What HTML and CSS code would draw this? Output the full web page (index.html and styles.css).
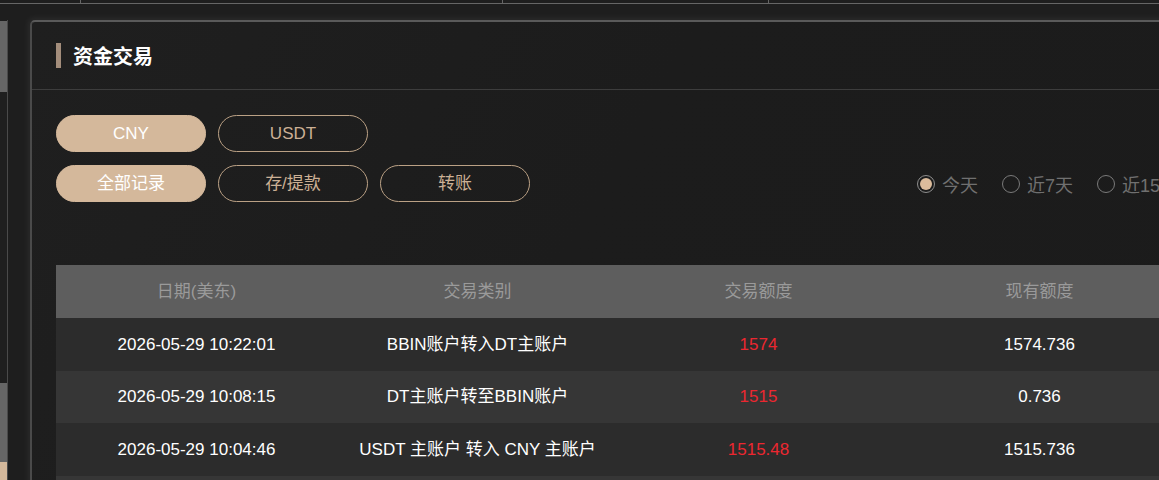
FILE: index.html
```html
<!DOCTYPE html>
<html lang="zh-CN">
<head>
    <meta charset="UTF-8">
    <meta name="viewport" content="width=device-width, initial-scale=1.0">
    <title>资金交易</title>
    <link rel="stylesheet" href="styles.css">
</head>
<body>
    <div class="topbar">
        <span class="topbar-cell cell-a"></span>
        <span class="topbar-cell cell-b"></span>
        <span class="topbar-cell cell-c"></span>
        <span class="topbar-cell cell-d"></span>
    </div>

    <div class="layout">
        <div class="sidebar">
            <div class="side-block side-gray"></div>
            <div class="side-block side-dark"></div>
            <div class="side-block side-gray short"></div>
            <div class="side-block side-gold"></div>
        </div>

        <div class="panel">
            <div class="panel-header">
                <span class="title-bar"></span>
                <h1>资金交易</h1>
            </div>

            <div class="panel-body">
                <div class="btn-row">
                    <button class="pill active">CNY</button>
                    <button class="pill">USDT</button>
                </div>
                <div class="btn-row filter-row">
                    <button class="pill active">全部记录</button>
                    <button class="pill">存/提款</button>
                    <button class="pill">转账</button>

                    <div class="range">
                        <label class="radio checked"><span class="dot"></span>今天</label>
                        <label class="radio"><span class="dot"></span>近7天</label>
                        <label class="radio"><span class="dot"></span>近15天</label>
                    </div>
                </div>

                <table class="records">
                    <thead>
                        <tr>
                            <th>日期(美东)</th>
                            <th>交易类别</th>
                            <th>交易额度</th>
                            <th>现有额度</th>
                        </tr>
                    </thead>
                    <tbody>
                        <tr>
                            <td>2026-05-29 10:22:01</td>
                            <td>BBIN账户转入DT主账户</td>
                            <td class="amount">1574</td>
                            <td>1574.736</td>
                        </tr>
                        <tr>
                            <td>2026-05-29 10:08:15</td>
                            <td>DT主账户转至BBIN账户</td>
                            <td class="amount">1515</td>
                            <td>0.736</td>
                        </tr>
                        <tr>
                            <td>2026-05-29 10:04:46</td>
                            <td>USDT 主账户 转入 CNY 主账户</td>
                            <td class="amount">1515.48</td>
                            <td>1515.736</td>
                        </tr>
                        <tr class="filler">
                            <td></td>
                            <td></td>
                            <td></td>
                            <td></td>
                        </tr>
                    </tbody>
                </table>
            </div>
        </div>
    </div>
</body>
</html>
```

FILE: styles.css
```css
html, body {
    margin: 0;
    height: 100%;
}
body {
    font-family: "Liberation Sans", "Noto Sans CJK SC", sans-serif;
    font-size: 17px;
    background-color: #1e1e1e;
    color: #fff;
    overflow: hidden;
}

/* top strip */
.topbar {
    display: flex;
    height: 3px;
    border-bottom: 1px solid #666;
}
.topbar-cell {
    border-right: 1px solid #666;
}
.cell-a { width: 80px; }
.cell-b { width: 421px; }
.cell-c { width: 265px; }
.cell-d { flex: 1; border-right: none; }

.layout {
    display: flex;
    padding-top: 16px;
}

/* left column */
.sidebar {
    width: 7px;
    flex-shrink: 0;
    border-right: 1px solid #4a4a4a;
    display: flex;
    flex-direction: column;
    padding-top: 1px;
    height: 460px;
}
.side-block {
    flex-shrink: 0;
}
.side-gray {
    height: 71px;
    background-color: #666;
}
.side-gray.short {
    height: 79px;
}
.side-dark {
    height: 291px;
    background-color: #1f1f1f;
}
.side-gold {
    flex: 1;
    background-color: #d4b89b;
}

/* main panel */
.panel {
    margin-left: 22px;
    width: 1400px;
    flex-shrink: 0;
    background: linear-gradient(120deg, #1f1f1f 0%, #1c1c1c 40%, #1b1b1b 100%);
    border-top: 2px solid #5a5a5a;
    border-left: 2px solid #4a4a4a;
    border-top-left-radius: 5px;
    box-shadow: -2px -2px 6px rgba(255, 255, 255, 0.06);
    height: 470px;
}
.panel-header {
    display: flex;
    align-items: center;
    height: 67px;
    padding-left: 24px;
    border-bottom: 1px solid #3d3d3d;
}
.title-bar {
    width: 5px;
    height: 25px;
    background-color: #a38d7b;
}
.panel-header h1 {
    margin: 0 0 0 12px;
    font-size: 20px;
    font-weight: bold;
    color: #fff;
}

.panel-body {
    padding: 25px 0 0 24px;
}
.btn-row {
    display: flex;
    align-items: center;
    gap: 12px;
}
.filter-row {
    margin-top: 13px;
}
.pill {
    width: 150px;
    height: 37px;
    border-radius: 19px;
    border: 1px solid #bba185;
    background: transparent;
    color: #ccb095;
    font-family: inherit;
    font-size: 17px;
    line-height: 1;
    padding: 0;
    cursor: pointer;
}
.pill.active {
    background-color: #d4b89b;
    border-color: #d4b89b;
    color: #fff;
}

/* date range radios */
.range {
    display: flex;
    align-items: center;
    gap: 24px;
    margin-left: 375px;
}
.radio {
    display: flex;
    align-items: center;
    gap: 7px;
    color: #707070;
    font-size: 18px;
    white-space: nowrap;
}
.dot {
    width: 16px;
    height: 16px;
    border: 1.5px solid #7a7a7a;
    border-radius: 50%;
    box-sizing: content-box;
    position: relative;
}
.radio.checked .dot {
    border-color: #8d8d8d;
}
.radio.checked .dot::after {
    content: "";
    position: absolute;
    left: 2px;
    top: 2px;
    width: 12px;
    height: 12px;
    border-radius: 50%;
    background-color: #dcbc9c;
}

/* records table */
.records {
    margin-top: 63px;
    border-collapse: collapse;
    table-layout: fixed;
    width: 1124px;
}
.records th,
.records td {
    width: 281px;
    text-align: center;
    padding: 0;
    line-height: 1;
    white-space: nowrap;
}
.records th {
    height: 53px;
    background-color: #5e5e5e;
    color: #9a9a9a;
    font-weight: normal;
}
.records td {
    height: 52.5px;
    background-color: #2c2c2c;
}
.records tbody tr:nth-child(even) td {
    background-color: #363636;
}
.records td.amount {
    color: #ec2730;
}
```
